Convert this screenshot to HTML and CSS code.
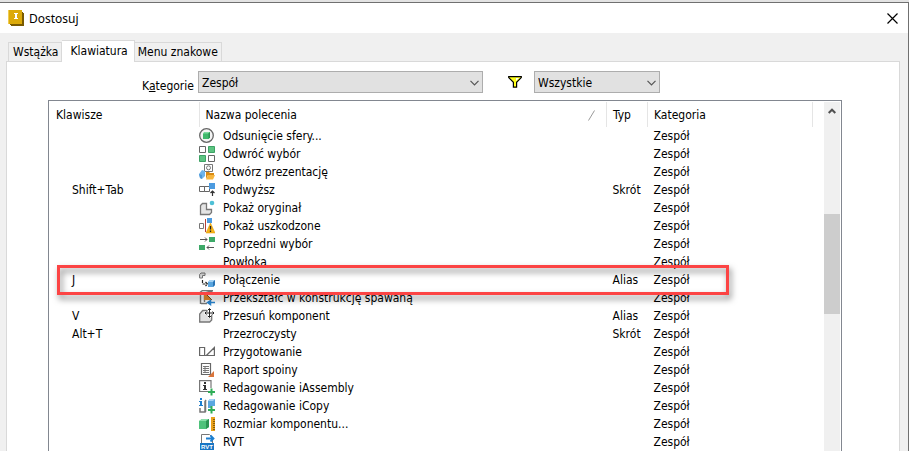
FILE: index.html
```html
<!DOCTYPE html>
<html lang="pl">
<head>
  <meta charset="UTF-8">
  <meta name="viewport" content="width=device-width, initial-scale=1.0">
  <title>Dostosuj</title>
  <link rel="stylesheet" href="styles.css">
</head>
<body>
  <div class="window">
    <header class="titlebar">
      <svg class="app-icon" width="16" height="16" viewBox="0 0 16 16" shape-rendering="crispEdges">
        <path fill="#7a5a00" d="M1 13h12V1l3 2v13H3z"/>
        <path fill="#dcaa0a" d="M0 0h14v14H0z"/>
        <path fill="#f0cc50" d="M0 0h1v14H0z"/>
        <path fill="#fff" d="M6 3h4v1H9v4h1v1H6V8h1V4H6z"/>
      </svg>
      <h1>Dostosuj</h1>
      <button class="close" type="button" aria-label="Zamknij">
        <svg width="11" height="11" viewBox="0 0 11 11"><path d="M.5.5l10 10M10.5.5l-10 10" stroke="#000" stroke-width="1.2"/></svg>
      </button>
    </header>

    <main class="content">
      <div class="tabs" role="tablist">
        <button class="tab" type="button" role="tab">Wstążka</button>
        <button class="tab active" type="button" role="tab" aria-selected="true">Klawiatura</button>
        <button class="tab" type="button" role="tab">Menu znakowe</button>
      </div>

      <div class="panel">
        <div class="filters">
          <label for="category">K<u>a</u>tegorie</label>
          <div class="combo combo-wide">
            <select id="category">
              <option>Zespół</option>
            </select>
            <svg width="9" height="6" viewBox="0 0 9 6"><path d="M.5.8l4 4 4-4" fill="none" stroke="#555" stroke-width="1.2"/></svg>
          </div>
          <svg class="funnel" width="14" height="12" viewBox="0 0 14 12">
            <path d="M.7.6h12.6v1L8.6 6.3v4.9H5.4V6.3L.7 1.6z" fill="#ffff1a" stroke="#000" stroke-width="1.2"/>
            <path d="M8 2h3L8 5z" fill="#fff"/>
          </svg>
          <div class="combo combo-small">
            <select id="type" aria-label="Typ">
              <option>Wszystkie</option>
            </select>
            <svg width="9" height="6" viewBox="0 0 9 6"><path d="M.5.8l4 4 4-4" fill="none" stroke="#555" stroke-width="1.2"/></svg>
          </div>
        </div>

        <div class="list">
          <table>
            <colgroup>
              <col class="col-keys">
              <col class="col-name">
              <col class="col-type">
              <col class="col-category">
            </colgroup>
            <thead>
              <tr>
                <th>Klawisze</th>
                <th>
                  <div class="sorted">Nazwa polecenia
                    <svg width="7" height="11" viewBox="0 0 7 11"><path d="M.5 10.5l6-10" stroke="#999"/></svg>
                  </div>
                </th>
                <th>Typ</th>
                <th>Kategoria</th>
              </tr>
            </thead>
            <tbody>
              <tr>
                <td></td>
                <td><div class="command">
                  <svg viewBox="0 0 16 16"><circle cx="7.5" cy="7.5" r="6.8" fill="#f4f4f4" stroke="#666" stroke-width="1.3"/><path d="M4 5.5L5.500 4H11v5.500L9.500 11H4z" fill="#3fb96b"/><path d="M4 5.500L5.500 4H11L9.500 5.500z" fill="#7fdca0"/><path d="M11 4v5.500L9.500 11V5.500z" fill="#2a9250"/></svg>
                  Odsunięcie sfery...</div></td>
                <td></td>
                <td>Zespół</td>
              </tr>
              <tr>
                <td></td>
                <td><div class="command">
                  <svg viewBox="0 0 16 16"><path d="M.5.5h6v6h-6zM9.500 9.500h6v6h-6z" fill="#fff" stroke="#666"/><path d="M9.500.5h6v6h-6zM.5 9.500h6v6h-6z" fill="#5cc481" stroke="#3da265"/></svg>
                  Odwróć wybór</div></td>
                <td></td>
                <td>Zespół</td>
              </tr>
              <tr>
                <td></td>
                <td><div class="command">
                  <svg viewBox="0 0 16 16"><path d="M5.500.5h8v7h-8z" fill="#fff" stroke="#777"/><circle cx="9.500" cy="3.800" r="2" fill="none" stroke="#777"/><path d="M0 10l3-4 3 1v5l-3 3-2-1z" fill="#6eb4ea"/><path d="M0 10l3 1v4l-2-1z" fill="#4a97d8"/><path d="M7 15V8h3l1 1h4v2H9z" fill="#d98b12"/><path d="M9 11h7l-2 4.500H7z" fill="#f7b53c"/></svg>
                  Otwórz prezentację</div></td>
                <td></td>
                <td>Zespół</td>
              </tr>
              <tr>
                <td>Shift+Tab</td>
                <td><div class="command">
                  <svg viewBox="0 0 16 16"><path d="M.5 4.500h5v5h-5zM5.500 4.500h5v5h-5z" fill="#fff" stroke="#666"/><path d="M10 1h6v6h-6z" fill="#4c9be0"/><path d="M13.500 14v-4M11.500 11l2-2 2 2" fill="none" stroke="#333" stroke-width="1.2"/></svg>
                  Podwyższ</div></td>
                <td>Skrót</td>
                <td>Zespół</td>
              </tr>
              <tr>
                <td></td>
                <td><div class="command">
                  <svg viewBox="0 0 16 16"><path d="M1.500 14.500v-9l2-2h4v6h5v3l-2 2z" fill="#e4e4e4" stroke="#777" stroke-width="1.3"/><circle cx="13" cy="3" r="2.3" fill="#4fc0d6"/></svg>
                  Pokaż oryginał</div></td>
                <td></td>
                <td>Zespół</td>
              </tr>
              <tr>
                <td></td>
                <td><div class="command">
                  <svg viewBox="0 0 16 16"><path d="M.5 5.500h4v5h-4z" fill="#fff" stroke="#777"/><path d="M6.500 1v13" stroke="#b5413a"/><path d="M8 0h5v5H8z" fill="#4c9be0"/><path d="M11.500 5L16 15H7z" fill="#f9b417" stroke="#d99500" stroke-width=".5"/><path d="M11.500 8v3.500M11.500 12.500V14" stroke="#222" stroke-width="1.3"/></svg>
                  Pokaż uszkodzone</div></td>
                <td></td>
                <td>Zespół</td>
              </tr>
              <tr>
                <td></td>
                <td><div class="command">
                  <svg viewBox="0 0 16 16"><path d="M10 1h6v5h-6zM0 9h6v5H0z" fill="#3da968"/><path d="M1 3.500h7M6 1.500l2 2-2 2M15 11.500H8M10 9.500l-2 2 2 2" fill="none" stroke="#555"/></svg>
                  Poprzedni wybór</div></td>
                <td></td>
                <td>Zespół</td>
              </tr>
              <tr>
                <td></td>
                <td><div class="command no-icon">Powłoka</div></td>
                <td></td>
                <td>Zespół</td>
              </tr>
              <tr>
                <td>J</td>
                <td><div class="command">
                  <svg viewBox="0 0 16 16"><path d="M.6 6V2.500L2 1h4v2.500H3.500V6z" fill="#ddd" stroke="#777"/><path d="M3.500 8v4H8M6.500 10l2 2-2 2" fill="none" stroke="#222" stroke-width="1.2" stroke-dasharray="3 1"/><path d="M9 10l2-2h5v5l-2 2H9z" fill="#59a5df"/><path d="M9 10l2-2h5l-2 2z" fill="#a3d2f4"/><path d="M16 8v5l-2 2v-5z" fill="#2973b3"/></svg>
                  Połączenie</div></td>
                <td>Alias</td>
                <td>Zespół</td>
              </tr>
              <tr>
                <td></td>
                <td><div class="command">
                  <svg viewBox="0 0 16 16"><path d="M1.500 14V2l2-1.500H14M2 13.500h6M5.500 12V3l8-2" fill="none" stroke="#777" stroke-width="1.4"/><path d="M5 2v8h8z" fill="#e88b2c"/><path d="M5 2l8 8" stroke="#80501f"/><path d="M16 12.500H9M11.500 10.500l-3 2 3 2z" fill="#2a83cc" stroke="#2a83cc" stroke-width="1.5"/></svg>
                  Przekształć w konstrukcję spawaną</div></td>
                <td></td>
                <td>Zespół</td>
              </tr>
              <tr>
                <td>V</td>
                <td><div class="command">
                  <svg viewBox="0 0 16 16"><path d="M.7 13.500V6l3-3.500h4l5 5V12l-2 2H.7z" fill="#e0e0e0" stroke="#777" stroke-width="1.3"/><path d="M10.500 0v10M5.500 5h10" stroke="#fff" stroke-width="3"/><path d="M10.500.8v8.400M6 5h9M9 2l1.500-1.500L12 2M9 8l1.500 1.500L12 8M7.500 3.500L6 5l1.500 1.500M13.500 3.500L15 5l-1.500 1.500" fill="none" stroke="#222"/></svg>
                  Przesuń komponent</div></td>
                <td>Alias</td>
                <td>Zespół</td>
              </tr>
              <tr>
                <td>Alt+T</td>
                <td><div class="command no-icon">Przezroczysty</div></td>
                <td>Skrót</td>
                <td>Zespół</td>
              </tr>
              <tr>
                <td></td>
                <td><div class="command">
                  <svg viewBox="0 0 16 16"><path d="M.6 3.500h5v8h-5zM15.400 3.500v8h-8zM5.500 11.500h3" fill="#fff" stroke="#666" stroke-width="1.2"/></svg>
                  Przygotowanie</div></td>
                <td></td>
                <td>Zespół</td>
              </tr>
              <tr>
                <td></td>
                <td><div class="command">
                  <svg viewBox="0 0 16 16"><path d="M2.500 1.500h9v11h-9z" fill="#fff" stroke="#666" stroke-width="1.2"/><path d="M4 4.500h6M4 6.500h6M4 8.500h6M4 10.500h6M6 4v7" stroke="#777"/><path d="M15 9v6H9z" fill="#d9753b"/></svg>
                  Raport spoiny</div></td>
                <td></td>
                <td>Zespół</td>
              </tr>
              <tr>
                <td></td>
                <td><div class="command">
                  <svg viewBox="0 0 16 16"><path d="M9 11.500H.6V.6H12V8" fill="#fff" stroke="#777" stroke-width="1.2"/><path d="M5 2h2v2H5zM4 5h3v4h1v1H4V9h1V6H4z" fill="#333"/><path d="M12.500 8.500v7M9 12h7" stroke="#2fae57" stroke-width="2"/></svg>
                  Redagowanie iAssembly</div></td>
                <td></td>
                <td>Zespół</td>
              </tr>
              <tr>
                <td></td>
                <td><div class="command">
                  <svg viewBox="0 0 16 16"><path d="M1 0h2v2H1zM0 3h3v4h1v1H0V7h1V4H0z" fill="#1c7fd0"/><path d="M1 10v4h5V3.500L7 2M6.500 3v11" fill="none" stroke="#777" stroke-width="1.5"/><path d="M9 3l2-2h5v7h-4v2H9z" fill="#5aa7e0"/><path d="M9 3l2-2h5l-2 2z" fill="#a3d2f4"/><path d="M12.500 8v7.500M9 12h7" stroke="#2fae57" stroke-width="2"/></svg>
                  Redagowanie iCopy</div></td>
                <td></td>
                <td>Zespół</td>
              </tr>
              <tr>
                <td></td>
                <td><div class="command">
                  <svg viewBox="0 0 16 16"><path d="M0 5l3-2h7v8l-3 2H0z" fill="#4fc27b"/><path d="M0 5l3-2h7L7 5z" fill="#8be0aa"/><path d="M10 3v8l-3 2V5z" fill="#2b9553"/><path d="M12 1h4v14h-4z" fill="#eaa21c"/><path d="M14 3.500h2M14 5.500h2M14 7.500h2M14 9.500h2M14 11.500h2M14 13.500h2" stroke="#8d5c00"/></svg>
                  Rozmiar komponentu...</div></td>
                <td></td>
                <td>Zespół</td>
              </tr>
              <tr>
                <td></td>
                <td><div class="command">
                  <svg viewBox="0 0 16 16"><path d="M2.500 9V.5h8l3 3V9" fill="#fff" stroke="#777"/><path d="M7 4.500h7M11.500 1.500l3 3-3 3" fill="none" stroke="#1c7fd0" stroke-width="1.8"/><path d="M1 9h14v7H1z" fill="#1976c4"/><text x="8" y="14.5" text-anchor="middle" class="icon-text">RVT</text></svg>
                  RVT</div></td>
                <td></td>
                <td>Zespół</td>
              </tr>
            </tbody>
          </table>
          <div class="scrollbar">
            <svg width="8" height="6" viewBox="0 0 8 6"><path d="M.7 5L4 1.700 7.300 5" fill="none" stroke="#505050" stroke-width="2"/></svg>
            <div class="thumb"></div>
          </div>
          <div class="highlight"></div>
        </div>
      </div>
    </main>
  </div>
</body>
</html>
```

FILE: styles.css
```css
* {
  box-sizing: border-box;
}

body {
  margin: 0;
  padding-top: 2px;
  height: 100vh;
  overflow: hidden;
  background-color: #e3e3e3;
  color: #000;
  font-family: "DejaVu Sans Condensed", "DejaVu Sans", Tahoma, sans-serif;
  font-stretch: condensed;
  font-size: 12px;
}

button, select {
  font: inherit;
  color: inherit;
}

.window {
  display: flex;
  flex-direction: column;
  height: 100%;
  background-color: #f0f0f0;
  border-top: 1px solid #707070;
  border-right: 1px solid #707070;
}

.titlebar {
  display: flex;
  align-items: center;
  flex: none;
  height: 30px;
  padding: 0 10px 0 8px;
  background-color: #fff;
  font-stretch: normal;
}

.titlebar h1 {
  flex: 1;
  margin: 0 0 0 5px;
  font-family: "Noto Sans", "Segoe UI", sans-serif;
  font-size: 12px;
  font-weight: normal;
}

.close {
  display: flex;
  padding: 0;
  border: none;
  background: none;
}

.content {
  display: flex;
  flex-direction: column;
  flex: 1;
  min-height: 0;
  padding: 7px 8px 0 6px;
}

.tabs {
  display: flex;
  align-items: flex-end;
  flex: none;
  padding-left: 2px;
}

.tab {
  height: 19px;
  padding: 0 3px 0 4px;
  border: 1px solid #d9d9d9;
  border-bottom: none;
  background-color: #f0f0f0;
}

.tab + .tab {
  padding-left: 3px;
  border-left: none;
}

.tab.active {
  height: 22px;
  margin-bottom: -1px;
  padding: 0 6px 2px 8px;
  background-color: #fff;
  z-index: 1;
}

.panel {
  display: flex;
  flex-direction: column;
  flex: 1;
  min-height: 0;
  padding: 9px 57px 0 41px;
  background-color: #fff;
  border: 1px solid #d9d9d9;
  border-bottom: none;
}

.filters {
  display: flex;
  align-items: center;
  flex: none;
  padding-left: 94px;
}

.filters label {
  align-self: flex-end;
  width: 56px;
}

.combo {
  position: relative;
  height: 22px;
}

.combo-wide {
  width: 285px;
}

.combo-small {
  width: 126px;
}

.combo select {
  width: 100%;
  height: 100%;
  padding: 1px 3px 0;
  border: 1px solid #adadad;
  border-radius: 0;
  background-color: #e1e1e1;
  appearance: none;
}

.combo svg {
  position: absolute;
  top: 9px;
  right: 4px;
  pointer-events: none;
}

.funnel {
  margin: 0 12px 0 25px;
}

.list {
  position: relative;
  display: flex;
  flex: 1;
  min-height: 0;
  margin-top: 7px;
  padding: 1px 1px 0 0;
  overflow: hidden;
  border: 1px solid #828790;
  border-bottom: none;
}

table {
  flex: 1;
  align-self: flex-start;
  margin-right: 11px;
  table-layout: fixed;
  border-collapse: collapse;
}

.col-keys {
  width: 150px;
}

.col-type {
  width: 41px;
}

.col-category {
  width: 165px;
}

th {
  height: 25px;
  padding: 1px 7px 0 6px;
  border-right: 1px solid #e5e5e5;
  font-weight: normal;
  text-align: left;
}

th:first-child {
  padding-left: 7px;
}

td {
  height: 18px;
  padding: 0 0 0 6px;
  line-height: 18px;
  white-space: nowrap;
}

td:first-child {
  padding-left: 23px;
}

td:nth-child(2) {
  padding-left: 0;
}

.sorted {
  display: flex;
  align-items: center;
  justify-content: space-between;
  padding-right: 4px;
}

.command {
  display: flex;
  align-items: center;
  gap: 8px;
  height: 18px;
}

.command svg {
  width: 16px;
  height: 16px;
}

.command.no-icon {
  padding-left: 24px;
}

.icon-text {
  fill: #fff;
  font-family: "Liberation Sans", Arial, sans-serif;
  font-size: 6px;
  font-weight: bold;
}

.scrollbar {
  display: flex;
  flex-direction: column;
  align-items: center;
  width: 16px;
  padding-top: 6px;
  background-color: #f0f0f0;
}

.thumb {
  width: 100%;
  height: 100px;
  margin-top: 100px;
  background-color: #cdcdcd;
}

/* red frame over the J / Połączenie row */
.highlight {
  position: absolute;
  top: 164px;
  left: 8px;
  right: 112px;
  height: 30px;
  border: 3px solid #fc4444;
  filter: drop-shadow(2px 4px 3px rgba(0, 0, 0, 0.5));
  pointer-events: none;
}
```
